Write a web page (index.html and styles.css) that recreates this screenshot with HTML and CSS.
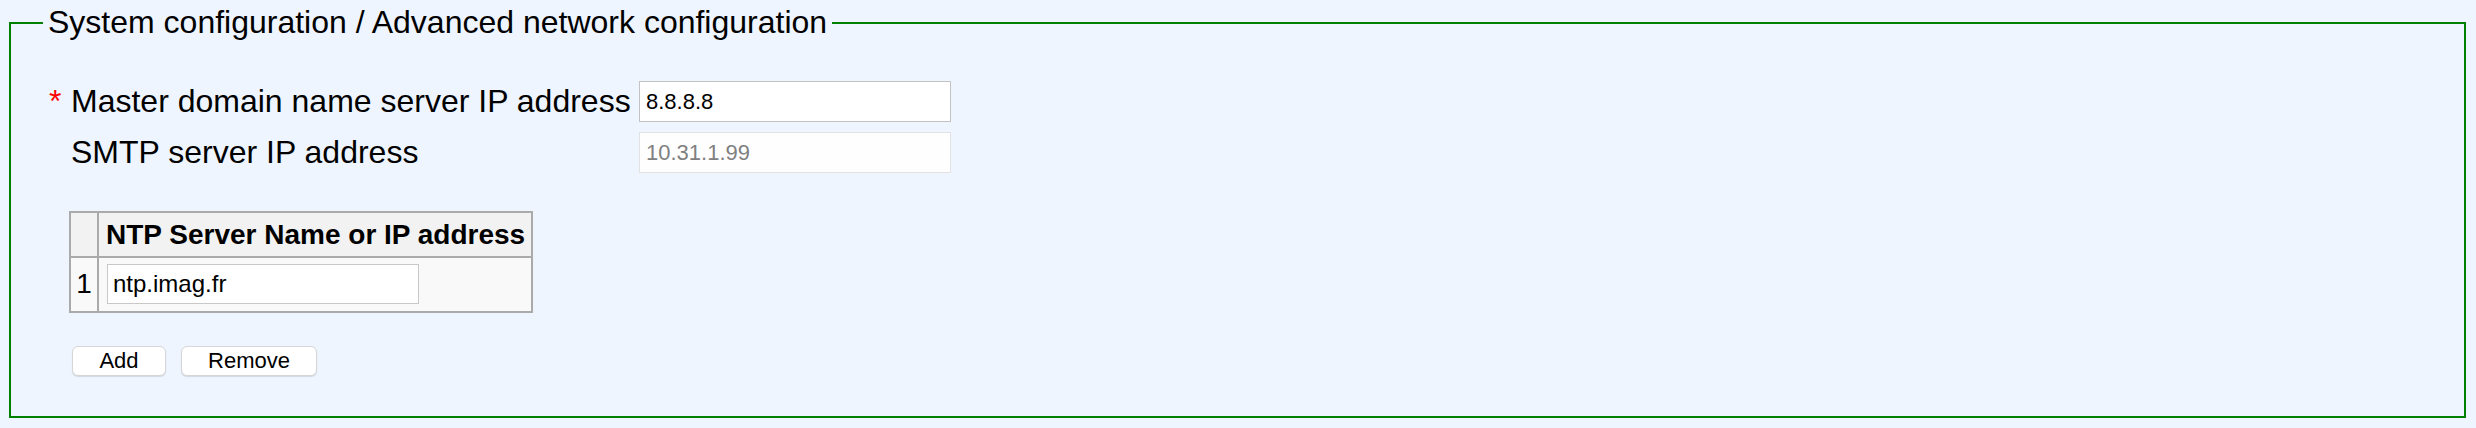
FILE: index.html
```html
<!DOCTYPE html>
<html>
<head>
<meta charset="utf-8">
<link rel="stylesheet" href="styles.css">
</head>
<body>
<fieldset class="panel">
  <legend class="panel-title">System configuration / Advanced network configuration</legend>
  <div class="form">
    <span class="req">*</span>
    <label class="field-label">Master domain name server IP address</label>
    <input class="field-input" type="text" value="8.8.8.8">
    <span class="req"></span>
    <label class="field-label">SMTP server IP address</label>
    <input class="field-input field-input-disabled" type="text" value="10.31.1.99" disabled>
  </div>
  <table class="ntp">
    <thead>
      <tr><th class="idx"></th><th class="name">NTP Server Name or IP address</th></tr>
    </thead>
    <tbody>
      <tr><td class="idx">1</td><td class="name"><input class="ntp-input" type="text" value="ntp.imag.fr"></td></tr>
    </tbody>
  </table>
  <div class="buttons">
    <button class="btn btn-add" type="button">Add</button>
    <button class="btn btn-remove" type="button">Remove</button>
  </div>
</fieldset>
</body>
</html>
```
FILE: styles.css
```css
html, body {
  margin: 0;
  padding: 0;
  background: #eef5fe;
}
body {
  font-family: "Liberation Sans", Arial, Helvetica, sans-serif;
  color: #000;
}
.panel {
  margin: 4px 10px 10px 9px;
  border: 2px solid #008000;
  padding: 0 0 40px 0;
  min-width: 0;
}
.panel-title {
  margin-left: 32px;
  padding: 0 5px;
  font-size: 32px;
  line-height: 37px;
}
.form {
  display: grid;
  grid-template-columns: 22px 568px 312px;
  grid-auto-rows: 41px;
  row-gap: 10px;
  align-items: center;
  margin-top: 40px;
  padding-left: 38px;
}
.req {
  color: #ff0000;
  font-size: 32px;
  line-height: 41px;
}
.field-label {
  font-size: 32px;
  line-height: 41px;
}
.field-input {
  box-sizing: border-box;
  width: 312px;
  height: 41px;
  margin: 0;
  border: 1px solid #c2c2c2;
  background: #fff;
  padding: 0 6px;
  font-family: "Liberation Sans", Arial, sans-serif;
  font-size: 22px;
  color: #000;
  outline: none;
}
.field-input-disabled {
  border-color: #e2e2e2;
  background: #fefefe;
  color: #808080;
}
.ntp {
  margin: 38px 0 0 58px;
  border: 2px solid #aaaaaa;
  border-spacing: 0;
  font-size: 28px;
}
.ntp th {
  background: #f2f2f2;
  font-weight: bold;
  text-align: left;
  height: 43px;
  padding: 0 6px 0 7px;
  line-height: 32px;
}
.ntp td {
  background: #f9f9f9;
  border-top: 2px solid #aaaaaa;
  padding: 6px 0 7px 8px;
  height: 40px;
}
.ntp th + th,
.ntp td + td {
  border-left: 2px solid #aaaaaa;
}
.ntp .idx {
  width: 26px;
  padding: 0;
  text-align: center;
}
.ntp td.idx {
  padding: 6px 0 7px 0;
  line-height: 40px;
}
.ntp-input {
  box-sizing: border-box;
  display: block;
  width: 312px;
  height: 40px;
  margin: 0;
  border: 1px solid #c8c8c8;
  background: #fff;
  padding: 0 5px;
  font-family: "Liberation Sans", Arial, sans-serif;
  font-size: 24px;
  color: #000;
  outline: none;
}
.buttons {
  display: flex;
  gap: 15px;
  margin: 33px 0 0 61px;
}
.btn {
  box-sizing: border-box;
  height: 30px;
  padding: 0;
  background: #fff;
  border: 1px solid #d6d6d6;
  border-radius: 6px;
  box-shadow: 0 1px 1px rgba(0, 0, 0, 0.12);
  font-family: "Liberation Sans", Arial, sans-serif;
  font-size: 22px;
  line-height: 28px;
  color: #000;
}
.btn-add {
  width: 94px;
}
.btn-remove {
  width: 136px;
}
```
